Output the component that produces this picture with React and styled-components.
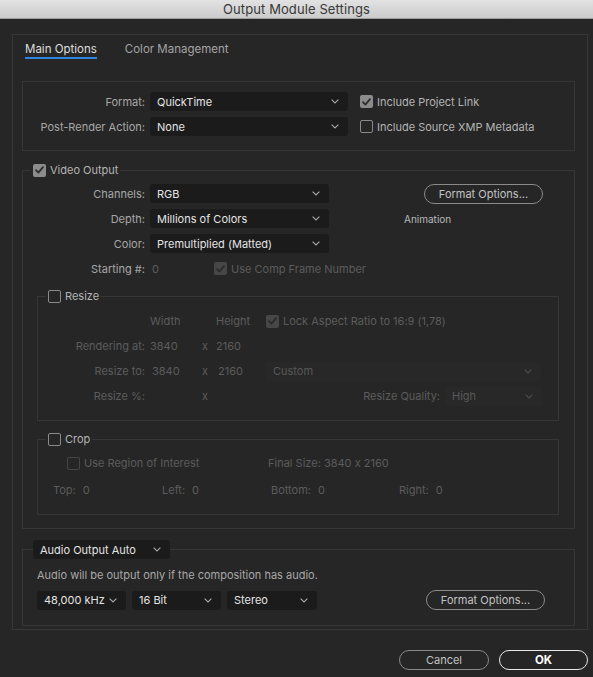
import React from 'react';
import styled, { createGlobalStyle } from 'styled-components';

const GlobalStyle = createGlobalStyle`
    * { box-sizing: border-box; }
    html, body {
        margin: 0;
        padding: 0;
        background: #262626;
    }
    body {
        font-family: Inter, "Noto Sans", sans-serif;
        font-size: 11px;
        font-feature-settings: "calt" 0;
        color: #a8a8a8;
    }
`;

function Chevron() {
    return (
        <svg width="8" height="5" viewBox="0 0 8 5">
            <polyline points="0.6,0.6 4,4 7.4,0.6" fill="none" stroke="currentColor" strokeWidth="1.1" />
        </svg>
    );
}

function Checkbox({ checked, dim }) {
    return (
        <Box $checked={checked} $dim={dim}>
            {checked && (
                <svg width="9" height="8" viewBox="0 0 9 8">
                    <polyline points="1,4.2 3.4,6.6 8,1.2" fill="none" stroke="currentColor" strokeWidth="1.8" strokeLinecap="round" strokeLinejoin="round" />
                </svg>
            )}
        </Box>
    );
}

function Select({ value, width, dim }) {
    return (
        <SelectBox $width={width} $dim={dim}>
            <span>{value}</span>
            <Chevron />
        </SelectBox>
    );
}

function CheckItem({ checked, dim, children }) {
    return (
        <CheckWrap $dim={dim}>
            <Checkbox checked={checked} dim={dim} />
            <span>{children}</span>
        </CheckWrap>
    );
}

function App() {
    return (
        <Window>
            <GlobalStyle />
            <TitleBar>Output Module Settings</TitleBar>
            <Body>
                <Panel>
                    <Tabs>
                        <Tab $active>Main Options</Tab>
                        <Tab>Color Management</Tab>
                    </Tabs>

                    <Group as="div" $pad="10px 0 14px">
                        <Rows>
                            <FormRow>
                                <Label>Format:</Label>
                                <Select value="QuickTime" width={198} />
                                <CheckItem checked>Include Project Link</CheckItem>
                            </FormRow>
                            <FormRow>
                                <Label>Post-Render Action:</Label>
                                <Select value="None" width={198} />
                                <CheckItem>Include Source XMP Metadata</CheckItem>
                            </FormRow>
                        </Rows>
                    </Group>

                    <Group $pad="7px 0 13px" $top={12}>
                        <Legend>
                            <CheckItem checked>Video Output</CheckItem>
                        </Legend>
                        <VideoTop>
                            <VideoRows>
                                <FormRow>
                                    <Label>Channels:</Label>
                                    <Select value="RGB" width={179} />
                                </FormRow>
                                <FormRow>
                                    <Label>Depth:</Label>
                                    <Select value="Millions of Colors" width={179} />
                                </FormRow>
                                <FormRow>
                                    <Label>Color:</Label>
                                    <Select value="Premultiplied (Matted)" width={179} />
                                </FormRow>
                                <FormRow>
                                    <Label>Starting #:</Label>
                                    <Value $dim $w={52} $pl={2}>0</Value>
                                    <CheckItem checked dim>Use Comp Frame Number</CheckItem>
                                </FormRow>
                            </VideoRows>
                            <SideCol>
                                <PillButton $w={119} $left={20}>Format Options...</PillButton>
                                <Note>Animation</Note>
                            </SideCol>
                        </VideoTop>

                        <SubGroup $top={11} $pad="8px 16px 14px 0">
                            <Legend>
                                <CheckItem>Resize</CheckItem>
                            </Legend>
                            <ResizeGrid>
                                <span />
                                <Value $dim>Width</Value>
                                <span />
                                <Value $dim>Height</Value>
                                <CheckItem checked dim>Lock Aspect Ratio to 16:9 (1,78)</CheckItem>

                                <Label $dim $w="auto">Rendering at:</Label>
                                <Value $dim>3840</Value>
                                <Value $dim>x</Value>
                                <Value $dim>2160</Value>
                                <span />

                                <Label $dim $w="auto">Resize to:</Label>
                                <Value $dim $pl={2}>3840</Value>
                                <Value $dim>x</Value>
                                <Value $dim $pl={2}>2160</Value>
                                <Select value="Custom" width={275} dim />

                                <Label $dim $w="auto">Resize %:</Label>
                                <span />
                                <Value $dim>x</Value>
                                <span />
                                <QualityCell>
                                    <Value $dim>Resize Quality:</Value>
                                    <Select value="High" width={97} dim />
                                </QualityCell>
                            </ResizeGrid>
                        </SubGroup>

                        <SubGroup $top={11} $pad="7px 0 14px 0">
                            <Legend>
                                <CheckItem>Crop</CheckItem>
                            </Legend>
                            <CropRow $pl={29}>
                                <CropCell $w={201}>
                                    <CheckItem dim>Use Region of Interest</CheckItem>
                                </CropCell>
                                <Value $dim>Final Size: 3840 x 2160</Value>
                            </CropRow>
                            <CropRow $pl={15} $top={7}>
                                <CropCell $w={109}><Value $dim>Top:</Value><Value $dim>0</Value></CropCell>
                                <CropCell $w={109}><Value $dim>Left:</Value><Value $dim>0</Value></CropCell>
                                <CropCell $w={128}><Value $dim>Bottom:</Value><Value $dim>0</Value></CropCell>
                                <CropCell><Value $dim>Right:</Value><Value $dim>0</Value></CropCell>
                            </CropRow>
                        </SubGroup>
                    </Group>

                    <Group $pad="0" $top={11}>
                        <Legend $flat>
                            <Select value="Audio Output Auto" width={137} />
                        </Legend>
                        <AudioBody>
                            <AudioNote>Audio will be output only if the composition has audio.</AudioNote>
                            <AudioRow>
                                <Select value="48,000 kHz" width={89} />
                                <Select value="16 Bit" width={89} />
                                <Select value="Stereo" width={90} />
                                <PillButton $w={119} $left="auto">Format Options...</PillButton>
                            </AudioRow>
                        </AudioBody>
                    </Group>
                </Panel>

                <Footer>
                    <PillButton $w={90}>Cancel</PillButton>
                    <PillButton $w={89} $primary>OK</PillButton>
                </Footer>
            </Body>
        </Window>
    );
}

const Window = styled.div`
    width: 593px;
    height: 677px;
    display: flex;
    flex-direction: column;
    background: #262626;
    overflow: hidden;
`;

const TitleBar = styled.div`
    height: 19px;
    flex: none;
    display: flex;
    align-items: center;
    justify-content: center;
    background: linear-gradient(#e2e2e2, #cbcbcb);
    border-bottom: 1px solid #9c9c9c;
    color: #383838;
    font-size: 13px;
    letter-spacing: 0.1px;
`;

const Body = styled.div`
    padding: 15px 5px 0 12px;
`;

const Panel = styled.div`
    border: 1px solid #383838;
    padding: 0 12px 3px 9px;
`;

const Tabs = styled.div`
    display: flex;
    gap: 28px;
    padding: 7px 0 0 3px;
    height: 46px;
`;

const Tab = styled.div`
    height: 17px;
    line-height: 14px;
    color: ${p => (p.$active ? '#dedede' : '#a4a4a4')};
    border-bottom: 2px solid ${p => (p.$active ? '#2f86e0' : 'transparent')};
    font-size: 11.5px;
`;

const Group = styled.fieldset`
    margin: ${p => p.$top || 0}px 0 0;
    padding: ${p => p.$pad};
    border: 1px solid #363636;
    min-width: 0;
`;

const SubGroup = styled(Group)`
    margin: ${p => p.$top || 0}px 15px 0 14px;
`;

const Legend = styled.legend`
    display: flex;
    align-items: center;
    height: ${p => (p.$flat ? 19 : 14)}px;
    margin-left: ${p => (p.$flat ? 10 : 8)}px;
    padding: 0 ${p => (p.$flat ? 0 : 2)}px;
    line-height: 14px;
`;

const Rows = styled.div`
    display: flex;
    flex-direction: column;
    gap: 6px;
`;

const VideoRows = styled(Rows)`
    width: 306px;
    flex: none;
`;

const FormRow = styled.div`
    display: flex;
    align-items: center;
    height: 19px;
    gap: 12px;
`;

const Label = styled.div`
    flex: none;
    width: ${p => (p.$w ? p.$w : '127px')};
    padding-right: 5px;
    margin-right: -12px;
    text-align: right;
    color: ${p => (p.$dim ? '#5c5c5c' : '#a6a6a6')};
    white-space: nowrap;
    ${p => p.$w === 'auto' && 'margin-right: 0; width: auto;'}
`;

const Value = styled.span`
    flex: none;
    color: ${p => (p.$dim ? '#5c5c5c' : '#b0b0b0')};
    white-space: nowrap;
    ${p => p.$w && `width: ${p.$w}px;`}
    ${p => p.$pl && `padding-left: ${p.$pl}px;`}
`;

const SelectBox = styled.div`
    width: ${p => p.$width}px;
    height: 19px;
    flex: none;
    display: flex;
    align-items: center;
    justify-content: space-between;
    padding: 0 9px 0 7px;
    border-radius: 3px;
    background: ${p => (p.$dim ? '#282828' : '#1b1b1b')};
    color: ${p => (p.$dim ? '#585858' : '#e4e4e4')};
    white-space: nowrap;
    svg {
        color: ${p => (p.$dim ? '#4c4c4c' : '#a8a8a8')};
        flex: none;
    }
`;

const CheckWrap = styled.label`
    display: inline-flex;
    flex: none;
    align-items: center;
    gap: 4px;
    line-height: 14px;
    color: ${p => (p.$dim ? '#5c5c5c' : '#b4b4b4')};
    white-space: nowrap;
`;

const Box = styled.span`
    width: 13px;
    height: 13px;
    flex: none;
    border-radius: 2px;
    display: inline-flex;
    align-items: center;
    justify-content: center;
    background: ${p => (p.$checked ? (p.$dim ? '#474747' : '#8c8c8c') : 'transparent')};
    border: ${p => (p.$checked ? 'none' : `1.5px solid ${p.$dim ? '#464646' : '#8a8a8a'}`)};
    color: ${p => (p.$dim ? '#2b2b2b' : '#2e2e2e')};
`;

const VideoTop = styled.div`
    display: flex;
`;

const SideCol = styled.div`
    margin-left: 75px;
    display: flex;
    flex-direction: column;
    gap: 8px;
`;

const Note = styled.div`
    font-size: 10px;
    line-height: 14px;
    color: #b8b8b8;
`;

const PillButton = styled.div`
    width: ${p => p.$w}px;
    height: 20px;
    flex: none;
    ${p => p.$left !== undefined && `margin-left: ${typeof p.$left === 'number' ? p.$left + 'px' : p.$left};`}
    display: flex;
    align-items: center;
    justify-content: center;
    border-radius: 10px;
    border: 1.5px solid ${p => (p.$primary ? '#e8e8e8' : '#8a8a8a')};
    color: ${p => (p.$primary ? '#ffffff' : '#c2c2c2')};
    font-weight: ${p => (p.$primary ? 700 : 400)};
    font-size: ${p => (p.$primary ? '11.5px' : '11px')};
`;

const ResizeGrid = styled.div`
    display: grid;
    grid-template-columns: 112px 52px 14px 50px 1fr;
    grid-auto-rows: 20px;
    row-gap: 5px;
    align-items: center;
    & > ${Label} {
        padding-right: 5px;
    }
`;

const QualityCell = styled.div`
    display: flex;
    align-items: center;
    justify-content: flex-end;
    gap: 5px;
`;

const CropRow = styled.div`
    display: flex;
    align-items: center;
    height: 20px;
    padding-left: ${p => p.$pl}px;
    margin-top: ${p => p.$top || 0}px;
`;

const CropCell = styled.div`
    display: flex;
    align-items: center;
    gap: 7px;
    ${p => p.$w && `width: ${p.$w}px;`}
`;

const AudioBody = styled.div`
    padding: 9px 29px 15px 14px;
`;

const AudioNote = styled.div`
    line-height: 14px;
    color: #a8a8a8;
`;

const AudioRow = styled.div`
    display: flex;
    align-items: center;
    gap: 6px;
    margin-top: 8px;
`;

const Footer = styled.div`
    display: flex;
    justify-content: flex-end;
    gap: 10px;
    padding-top: 20px;
`;

export default App;
